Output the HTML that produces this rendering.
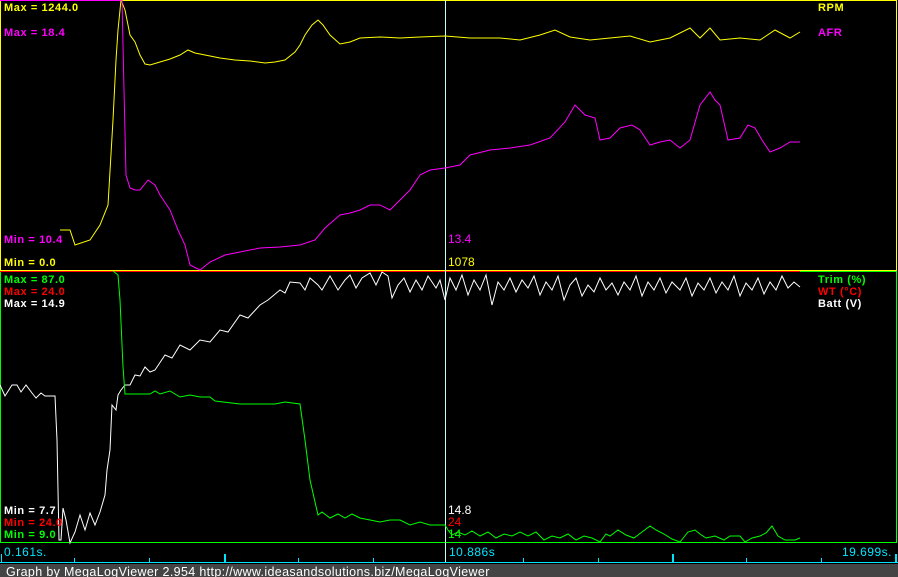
<!DOCTYPE html>
<html><head><meta charset="utf-8"><style>
html,body{margin:0;padding:0;background:#000;width:898px;height:577px;overflow:hidden}
svg{display:block}
text{font-family:"Liberation Sans",sans-serif;font-size:11px}
.b{font-weight:bold;letter-spacing:0.6px}
</style></head><body>
<svg width="898" height="577" viewBox="0 0 898 577" xmlns="http://www.w3.org/2000/svg">
<rect width="898" height="577" fill="#000"/>
<rect x="0.5" y="0.5" width="896" height="270" fill="none" stroke="#ffff00"/>
<line x1="0" y1="0.5" x2="121" y2="0.5" stroke="#ff00ff"/>
<rect x="0.5" y="271.5" width="896" height="271" fill="none" stroke="#00ff00"/>
<line x1="0" y1="270.5" x2="800" y2="270.5" stroke="#ffff00"/>
<line x1="0" y1="271.5" x2="800" y2="271.5" stroke="#ff0000"/>
<line x1="445.5" y1="0" x2="445.5" y2="562" stroke="#c0ffff"/>
<g fill="none" stroke-width="1">
<polyline stroke="#ffff00" points="60,230 70,230 75,245 90,240 100,225 108,205 113,120 116,60 118,30 121,0 125,10 130,35 135,42 140,55 145,64 150,65 160,62 170,59 180,55 188,50 195,53 205,55 220,58 235,60 250,61 265,63 275,62 285,60 295,52 300,45 305,35 312,25 318,20 323,25 330,35 340,44 350,42 360,38 380,37 400,38 420,37 445,36 470,38 500,38 520,40 540,35 555,30 570,37 590,40 610,38 630,36 650,42 670,38 690,28 700,38 710,28 720,40 740,38 760,40 775,30 790,38 800,32"/>
<polyline stroke="#ff00ff" points="120,0 122,0 124,90 126,175 130,188 135,190 140,190 148,180 155,185 160,195 170,210 178,230 185,245 190,265 200,270 210,262 225,255 240,252 260,248 280,247 300,245 315,240 325,228 340,215 350,213 360,210 370,205 380,205 390,210 400,200 410,190 420,175 430,170 445,168 460,165 470,155 490,150 510,148 530,145 550,138 565,122 575,105 585,115 595,118 600,140 610,138 620,128 632,125 640,130 650,145 660,142 670,140 680,148 690,140 700,105 710,92 715,100 720,105 728,140 740,138 748,125 755,128 762,140 770,152 780,148 790,142 800,142"/>
<polyline stroke="#ffffff" points="0,385 5,396 12,385 17,385 21,392 26,385 32,393 36,398 41,393 45,396 55,396 57,440 59,540 61,540 63,508 66,520 70,543 75,532 80,515 85,530 90,513 95,525 100,512 105,495 107,470 110,450 112,405 116,410 118,395 121,390 125,385 130,385 135,375 140,376 145,367 150,372 155,370 165,355 172,358 180,345 190,350 200,340 210,342 220,330 228,332 240,315 248,318 260,305 268,300 280,290 285,293 290,282 300,283 305,290 310,278 318,285 322,290 330,276 338,290 345,280 350,275 356,288 362,278 370,273 376,285 382,272 388,276 392,298 398,285 404,278 410,292 416,280 422,290 428,276 436,288 440,280 445,300 450,278 456,290 462,275 468,295 474,280 480,290 486,275 492,305 498,282 504,290 510,278 516,292 522,280 528,288 534,276 540,295 546,282 552,290 558,276 564,300 570,285 576,278 582,296 588,285 594,292 600,278 606,290 612,283 618,295 624,282 630,290 636,276 642,296 648,282 654,290 660,278 666,293 672,282 680,290 686,278 692,296 698,283 704,290 710,278 716,293 722,282 728,290 734,276 740,296 746,283 752,290 758,278 764,294 770,282 776,290 782,276 788,288 794,282 800,287"/>
<polyline stroke="#00ff00" points="113,271 118,275 120,300 123,367 125,394 150,394 155,391 160,394 170,391 180,397 190,395 200,397 210,397 215,401 240,404 275,404 285,402 300,404 305,440 310,480 318,515 322,512 330,518 338,514 345,518 352,514 360,518 370,520 380,522 390,520 400,520 410,525 420,522 430,525 445,525 448,530 452,535 458,532 465,535 472,531 480,536 488,532 496,538 504,534 512,536 520,532 528,536 536,532 544,540 552,536 560,538 568,534 576,540 584,536 592,538 600,542 606,534 610,536 618,530 626,535 634,538 642,532 650,526 656,530 664,534 672,539 680,542 688,532 695,530 700,534 706,538 715,536 724,540 730,536 740,536 745,542 752,538 760,536 766,533 772,526 778,536 785,540 795,540 800,538"/>
</g>
<text class="b" x="4" y="11" fill="#ffff00">Max = 1244.0</text>
<text class="b" x="4" y="36" fill="#ff00ff">Max = 18.4</text>
<text class="b" x="4" y="243" fill="#ff00ff">Min = 10.4</text>
<text class="b" x="4" y="266" fill="#ffff00">Min = 0.0</text>
<text class="b" x="818" y="11" fill="#ffff00">RPM</text>
<text class="b" x="818" y="36" fill="#ff00ff">AFR</text>
<text x="448" y="243" fill="#ff00ff" style="font-size:12px">13.4</text>
<text x="448" y="266" fill="#ffff00" style="font-size:12px">1078</text>
<text class="b" x="4" y="283" fill="#00ff00">Max = 87.0</text>
<text class="b" x="4" y="295" fill="#ff0000">Max = 24.0</text>
<text class="b" x="4" y="307" fill="#ffffff">Max = 14.9</text>
<text class="b" x="818" y="283" fill="#00ff00">Trim (%)</text>
<text class="b" x="818" y="295" fill="#ff0000">WT (°C)</text>
<text class="b" x="818" y="307" fill="#ffffff">Batt (V)</text>
<text class="b" x="4" y="514" fill="#ffffff">Min = 7.7</text>
<text class="b" x="4" y="526" fill="#ff0000">Min = 24.0</text>
<text class="b" x="4" y="538" fill="#00ff00">Min = 9.0</text>
<text x="448" y="514" fill="#ffffff" style="font-size:12px">14.8</text>
<text x="448" y="526" fill="#ff0000" style="font-size:12px">24</text>
<text x="448" y="538" fill="#00ff00" style="font-size:12px">14</text>
<line x1="0" y1="562.5" x2="898" y2="562.5" stroke="#00e5ff"/>
<g stroke="#00e5ff">
<line x1="1.5" y1="554" x2="1.5" y2="562"/>
<line x1="74.5" y1="558" x2="74.5" y2="562"/>
<line x1="149.5" y1="558" x2="149.5" y2="562"/>
<line x1="225" y1="554" x2="225" y2="562" stroke-width="2"/>
<line x1="298.5" y1="558" x2="298.5" y2="562"/>
<line x1="373.5" y1="558" x2="373.5" y2="562"/>
<line x1="523.5" y1="558" x2="523.5" y2="562"/>
<line x1="598.5" y1="558" x2="598.5" y2="562"/>
<line x1="673" y1="554" x2="673" y2="562" stroke-width="2"/>
<line x1="746.5" y1="558" x2="746.5" y2="562"/>
<line x1="821.5" y1="558" x2="821.5" y2="562"/>
<line x1="896" y1="554" x2="896" y2="562" stroke-width="2"/>
</g>
<text x="4" y="556" fill="#00e5ff" style="font-size:12px;letter-spacing:0.5px">0.161s.</text>
<text x="449" y="556" fill="#00e5ff" style="font-size:12px;letter-spacing:0.5px">10.886s</text>
<text x="892" y="556" fill="#00e5ff" text-anchor="end" style="font-size:12px;letter-spacing:0.5px">19.699s.</text>
<rect x="0" y="564" width="898" height="13" fill="#444444"/>
<text x="6" y="576" fill="#ffffff" style="font-size:12.5px;letter-spacing:0.35px">Graph by MegaLogViewer 2.954 http://www.ideasandsolutions.biz/MegaLogViewer</text>
</svg>
</body></html>
